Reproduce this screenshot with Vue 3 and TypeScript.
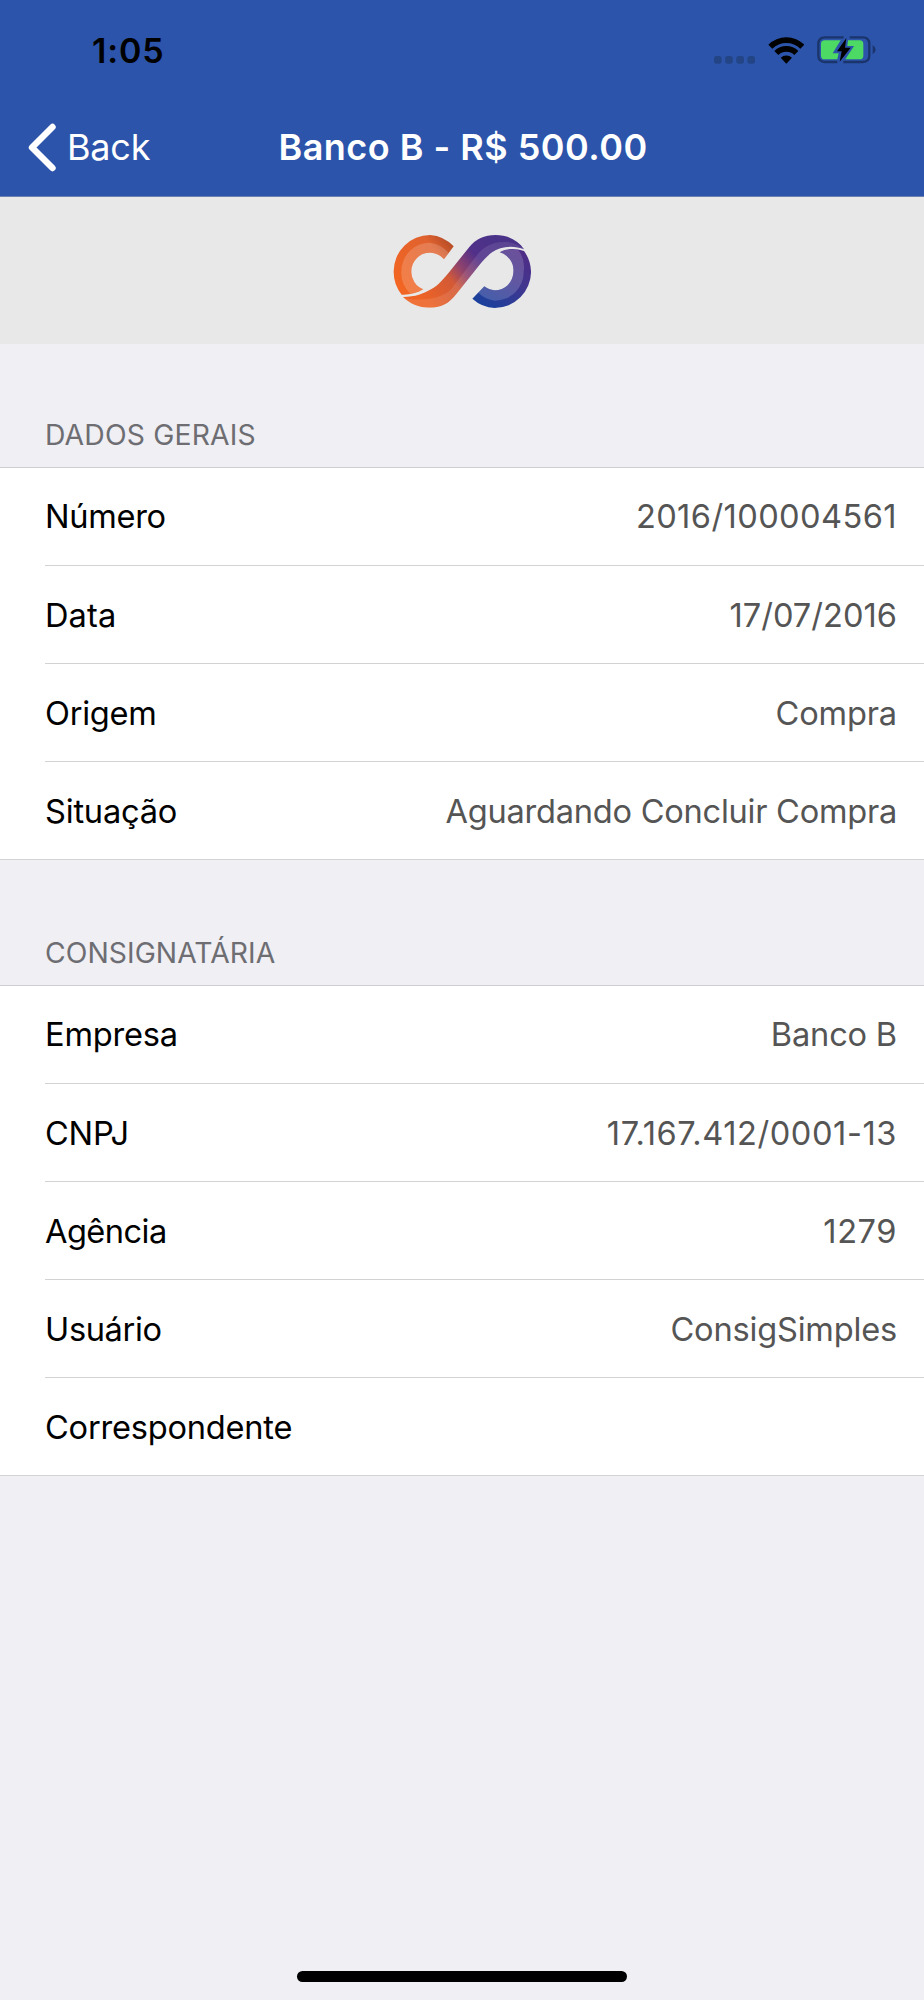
<script setup lang="ts">
interface Row {
  label: string
  value: string
  labelTracking: number
  valueTracking: number
}

interface Section {
  title: string
  tracking: number
  rows: Row[]
}

const sections: Section[] = [
  {
    title: 'DADOS GERAIS',
    tracking: 0.17,
    rows: [
      { label: 'Número', value: '2016/100004561', labelTracking: -0.3, valueTracking: 0.41 },
      { label: 'Data', value: '17/07/2016', labelTracking: 0.1, valueTracking: 0.02 },
      { label: 'Origem', value: 'Compra', labelTracking: -0.25, valueTracking: -0.15 },
      { label: 'Situação', value: 'Aguardando Concluir Compra', labelTracking: -0.2, valueTracking: -0.25 },
    ],
  },
  {
    title: 'CONSIGNATÁRIA',
    tracking: 0.05,
    rows: [
      { label: 'Empresa', value: 'Banco B', labelTracking: -0.2, valueTracking: -0.19 },
      { label: 'CNPJ', value: '17.167.412/0001-13', labelTracking: -0.2, valueTracking: 0.57 },
      { label: 'Agência', value: '1279', labelTracking: -0.55, valueTracking: 0.55 },
      { label: 'Usuário', value: 'ConsigSimples', labelTracking: -0.36, valueTracking: -0.19 },
      { label: 'Correspondente', value: '', labelTracking: -0.22, valueTracking: 0 },
    ],
  },
]

const track = (n: number) => ({ letterSpacing: `${n}px` })
</script>

<template>
  <div class="screen">
    <header class="top">
      <div class="status">
        <span class="time">1:05</span>
        <div class="indicators">
          <svg class="dots" viewBox="0 0 124 24">
            <rect v-for="i in 4" :key="i" :x="(i - 1) * 33.5" y="0" width="23" height="23" rx="8" />
          </svg>
          <svg class="wifi" viewBox="0 0 110 81">
            <path d="M1 23 A77 77 0 0 1 109 23 L97 35 A60 60 0 0 0 13 35 Z" />
            <path d="M19 42 A51 51 0 0 1 91 42 L79 54 A35 35 0 0 0 31 54 Z" />
            <path d="M38 62 A25 25 0 0 1 72 62 L55 80 Z" />
          </svg>
          <svg class="battery" viewBox="0 0 177 84">
            <path class="shell" d="M80 4 H24 Q4 4 4 24 V58 Q4 78 24 78 H61 M98 4 H137 Q157 4 157 24 V58 Q157 78 137 78 H79" />
            <path class="shell-tip" d="M167 27 Q176 33 176 41 Q176 49 167 55 Z" />
            <path class="charge" d="M23 13 H71 L47 52 H65 L61 70 H23 Q12 70 12 59 V24 Q12 13 23 13 Z" />
            <path class="charge" d="M93 13 H128 Q139 13 139 24 V59 Q139 70 128 70 H85 L111 30 H91 Z" />
            <path class="bolt" d="M88 6 L60 46 H74 L68 77 L101 35 H84 Z" />
          </svg>
        </div>
      </div>
      <nav class="nav">
        <div class="back">
          <svg class="chevron" viewBox="0 0 29 49">
            <path d="M25.5 4 L5 24.5 L25.5 45" />
          </svg>
          <span class="back-label">Back</span>
        </div>
        <h1 class="title">Banco B - R$ 500.00</h1>
      </nav>
    </header>

    <div class="brand">
      <svg class="logo" viewBox="38 42 416 224">
        <defs>
          <linearGradient id="hookWarm" gradientUnits="userSpaceOnUse" x1="60" y1="200" x2="215" y2="75">
            <stop offset="0" stop-color="#f26522" />
            <stop offset="0.75" stop-color="#e0622f" />
            <stop offset="1" stop-color="#b84e28" />
          </linearGradient>
          <linearGradient id="band" gradientUnits="userSpaceOnUse" x1="130" y1="245" x2="345" y2="65">
            <stop offset="0" stop-color="#ee6325" />
            <stop offset="0.37" stop-color="#d35a36" />
            <stop offset="0.53" stop-color="#92436a" />
            <stop offset="0.75" stop-color="#51308a" />
            <stop offset="1" stop-color="#4a3288" />
          </linearGradient>
          <linearGradient id="hookCool" gradientUnits="userSpaceOnUse" x1="425" y1="90" x2="320" y2="260">
            <stop offset="0" stop-color="#4f2c86" />
            <stop offset="0.45" stop-color="#42368f" />
            <stop offset="1" stop-color="#1b409c" />
          </linearGradient>
          <clipPath id="bandClip">
            <path d="M68 231 C105 231 130 221 152 208 C174 196 190 176 205 158 L267 81 C286 57 312 45 346 45 C383 45 414 62 431 88 C400 75 360 79 335 97 C320 108 310 120 299 133 L228 222 C206 250 184 263 149 263 C115 263 87 250 68 231 Z" />
          </clipPath>
        </defs>
        <path fill="url(#hookWarm)" d="M64 224 A109 109 0 0 1 40 154 A109 109 0 0 1 149 45 A109 109 0 0 1 220 79 L191 118 A56 56 0 0 0 149 98 A56 56 0 0 0 93 154 A56 56 0 0 0 129 208 C108 220 88 225 64 224 Z" />
        <path class="sheen" d="M90 221 A86 86 0 0 1 63 154 A86 86 0 0 1 149 68 A86 86 0 0 1 205 99 L191 118 A56 56 0 0 0 149 98 A56 56 0 0 0 93 154 A56 56 0 0 0 129 208 C116 215 104 219 90 221 Z" />
        <g clip-path="url(#bandClip)">
          <rect x="38" y="42" width="416" height="224" fill="url(#band)" />
          <path class="sheen soft" d="M68 233 C125 246 185 236 213 207 L290 105 C310 80 335 66 372 66 C400 66 420 76 435 92 L380 100 L320 120 L228 230 L160 270 H90 Z" />
        </g>
        <path fill="url(#hookCool)" d="M431 93 A109 109 0 0 1 452 155 A109 109 0 0 1 343 264 A109 109 0 0 1 276 236 L312 199 A56 56 0 0 0 343 211 A56 56 0 0 0 399 155 A56 56 0 0 0 358 97 C380 84 406 84 431 93 Z" />
        <path class="sheen" d="M414 90 A86 86 0 0 1 430 155 A86 86 0 0 1 343 242 A86 86 0 0 1 294 218 L312 199 A56 56 0 0 0 343 211 A56 56 0 0 0 399 155 A56 56 0 0 0 358 97 C375 87 394 85 414 90 Z" />
      </svg>
    </div>

    <section v-for="section in sections" :key="section.title" class="section">
      <h2 class="section-title" :style="track(section.tracking)">{{ section.title }}</h2>
      <dl class="rows">
        <div v-for="row in section.rows" :key="row.label" class="row">
          <dt class="label" :style="track(row.labelTracking)">{{ row.label }}</dt>
          <dd class="value" :style="track(row.valueTracking)">{{ row.value }}</dd>
        </div>
      </dl>
    </section>

    <footer class="home"><div class="home-bar"></div></footer>
  </div>
</template>

<style>
body {
  margin: 0;
  background: #efeff4;
}
</style>

<style scoped>
.screen {
  display: flex;
  flex-direction: column;
  width: 924px;
  height: 2000px;
  overflow: hidden;
  background: #efeff4;
  font-family: Inter, "Liberation Sans", sans-serif;
}

.top {
  height: 197px;
  box-sizing: border-box;
  background: #2b54aa;
  border-bottom: 1px solid #6d80b3;
}

.status {
  display: flex;
  justify-content: space-between;
  height: 98px;
}

.time {
  margin: 30px 0 0 92px;
  font-size: 34px;
  line-height: 42px;
  font-weight: 600;
  letter-spacing: 0.9px;
  color: #000;
}

.indicators {
  display: flex;
  align-items: flex-start;
  margin-right: 48px;
}

.dots {
  width: 41.3px;
  height: 8px;
  margin-top: 55.8px;
  fill: #234586;
}

.wifi {
  width: 36.7px;
  height: 27px;
  margin: 36.8px 0 0 12.4px;
}

.battery {
  width: 59px;
  height: 28px;
  margin: 36.4px 0 0 12.7px;
}

.shell {
  fill: none;
  stroke: #1b356c;
  stroke-width: 7;
}

.shell-tip {
  fill: #1b356c;
}

.charge {
  fill: #4cd964;
}

.nav {
  display: grid;
  grid-template-columns: 276px 1fr;
  align-items: start;
  height: 98px;
}

.back {
  display: flex;
  padding: 25px 0 0 27px;
}

.chevron {
  width: 29px;
  height: 49px;
}

.chevron path {
  fill: none;
  stroke: #fff;
  stroke-width: 6.4;
  stroke-linecap: round;
  stroke-linejoin: round;
}

.back-label {
  margin: 2px 0 0 11px;
  color: #fff;
  font-size: 36px;
  line-height: 44px;
  letter-spacing: -0.2px;
}

.title {
  margin: 27px 0 0 2.5px;
  color: #fff;
  font-size: 36px;
  line-height: 44px;
  font-weight: 600;
  letter-spacing: 0.48px;
  white-space: nowrap;
}

.brand {
  display: flex;
  justify-content: center;
  height: 147px;
  background: #e8e8e8;
}

.logo {
  width: 138.7px;
  height: 74.7px;
  margin-top: 37px;
}

.sheen {
  fill: #fff;
  fill-opacity: 0.17;
}

.sheen.soft {
  fill-opacity: 0.1;
}

.section-title {
  display: flex;
  align-items: flex-end;
  box-sizing: border-box;
  height: 125px;
  margin: 0;
  padding: 0 0 15px 45px;
  color: #6d6d72;
  font-size: 28.3px;
  line-height: 34px;
  font-weight: 400;
}

.brand + .section .section-title {
  height: 123px;
}

.rows {
  margin: 0;
  background: #fff;
  border-top: 1px solid #cfced4;
}

.row {
  display: flex;
  align-items: center;
  justify-content: space-between;
  box-sizing: border-box;
  height: 98px;
  margin-left: 45px;
  padding-right: 27px;
  border-bottom: 1px solid #d3d3d6;
  font-size: 32.6px;
  line-height: 40px;
  white-space: nowrap;
}

.row:first-child {
  padding-bottom: 2px;
}

.row:last-child {
  margin-left: 0;
  padding-left: 45px;
}

.label {
  color: #000;
}

.value {
  margin: 0;
  color: #555;
}

.home {
  display: flex;
  justify-content: center;
  margin-top: auto;
  padding-bottom: 18px;
}

.home-bar {
  width: 330px;
  height: 11px;
  border-radius: 6px;
  background: #000;
}
</style>
